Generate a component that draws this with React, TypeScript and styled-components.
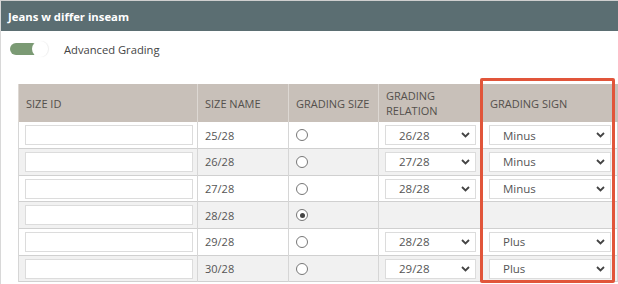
import React from "react";
import styled, { createGlobalStyle } from "styled-components";

const GlobalStyle = createGlobalStyle`
  html, body {
    margin: 0;
    padding: 0;
    background: #fff;
  }
  body {
    font-family: "Open Sans", "Liberation Sans", sans-serif;
    color: #555;
  }
`;

type Row = {
  name: string;
  checked?: boolean;
  relation?: string;
  sign?: string;
};

const rows: Row[] = [
  { name: "25/28", relation: "26/28", sign: "Minus" },
  { name: "26/28", relation: "27/28", sign: "Minus" },
  { name: "27/28", relation: "28/28", sign: "Minus" },
  { name: "28/28", checked: true },
  { name: "29/28", relation: "28/28", sign: "Plus" },
  { name: "30/28", relation: "29/28", sign: "Plus" },
];

const Chevron = () => (
  <svg width="9" height="6" viewBox="0 0 9 6">
    <polyline points="1,1 4.5,4.5 8,1" fill="none" stroke="#444" strokeWidth="1.8" />
  </svg>
);

export default function App() {
  return (
    <>
      <GlobalStyle />
      <Panel>
        <TitleBar>Jeans w differ inseam</TitleBar>
        <Body>
          <ToggleRow>
            <Toggle>
              <Track />
              <Knob />
            </Toggle>
            <ToggleLabel>Advanced Grading</ToggleLabel>
          </ToggleRow>
          <TableWrap>
            <Grid>
              <colgroup>
                <col style={{ width: 179 }} />
                <col style={{ width: 91 }} />
                <col style={{ width: 90 }} />
                <col style={{ width: 104 }} />
                <col style={{ width: 135 }} />
              </colgroup>
              <thead>
                <tr>
                  <Th>Size ID</Th>
                  <Th>Size Name</Th>
                  <Th>Grading Size</Th>
                  <Th>
                    Grading
                    <br />
                    Relation
                  </Th>
                  <Th>Grading Sign</Th>
                </tr>
              </thead>
              <tbody>
                {rows.map((r, i) => (
                  <Tr key={r.name} $alt={i % 2 === 1}>
                    <Td $pad={6}>
                      <TextBox />
                    </Td>
                    <Td>{r.name}</Td>
                    <Td>
                      <Radio $checked={!!r.checked} />
                    </Td>
                    <Td $pad={6}>
                      {r.relation && (
                        <SelectBox $indent={13}>
                          <span>{r.relation}</span>
                          <Chevron />
                        </SelectBox>
                      )}
                    </Td>
                    <Td $pad={6}>
                      {r.sign && (
                        <SelectBox $indent={13}>
                          <span>{r.sign}</span>
                          <Chevron />
                        </SelectBox>
                      )}
                    </Td>
                  </Tr>
                ))}
              </tbody>
            </Grid>
            <Highlight />
          </TableWrap>
        </Body>
      </Panel>
    </>
  );
}

const Panel = styled.div`
  width: 618px;
  height: 284px;
  box-sizing: border-box;
  border-left: 1px solid #d8d8d8;
  border-top: 1px solid #cfcfcf;
  overflow: hidden;
`;

const TitleBar = styled.div`
  height: 30px;
  background: #5b6e72;
  color: #fff;
  font-weight: 700;
  font-size: 11.3px;
  padding-left: 7px;
  display: flex;
  align-items: center;
`;

const Body = styled.div`
  padding: 0 0 0 17px;
`;

const ToggleRow = styled.div`
  display: flex;
  align-items: center;
  height: 36px;
  margin-left: -8px;
`;

const Toggle = styled.div`
  position: relative;
  width: 38px;
  height: 16px;
  margin-right: 16px;
`;

const Track = styled.div`
  position: absolute;
  left: 0;
  top: 2px;
  width: 30px;
  height: 12px;
  border-radius: 6px;
  background: #7b9a74;
`;

const Knob = styled.div`
  position: absolute;
  left: 22px;
  top: 0;
  width: 16px;
  height: 16px;
  border-radius: 50%;
  background: #fff;
  box-shadow: 1px 0 1px rgba(0, 0, 0, 0.07);
`;

const ToggleLabel = styled.span`
  font-size: 11.2px;
  color: #444;
`;

const TableWrap = styled.div`
  position: relative;
  margin-top: 17px;
`;

const Grid = styled.table`
  border-collapse: collapse;
  table-layout: fixed;
  width: 599px;
  font-size: 11px;
  color: #555;
`;

const Th = styled.th`
  height: 38px;
  padding: 0 7px;
  text-align: left;
  font-weight: 400;
  text-transform: uppercase;
  line-height: 15px;
  background: #c8c0b9;
  color: #54504c;
  border-left: 1px solid #ddd8d3;
  box-sizing: border-box;
`;

const Tr = styled.tr<{ $alt: boolean }>`
  height: 26.67px;
  background: ${(p) => (p.$alt ? "#f1f1f1" : "#fff")};
  border-bottom: 1px solid #d0d0d0;
`;

const Td = styled.td<{ $pad?: number }>`
  padding: 0 ${(p) => p.$pad ?? 7}px;
  border-left: 1px solid #d6d6d6;
  border-right: 1px solid #d6d6d6;
  vertical-align: middle;
`;

const TextBox = styled.div`
  height: 20px;
  width: 168px;
  box-sizing: border-box;
  border: 1px solid #dcdcdc;
  background: #fff;
`;

const Radio = styled.div<{ $checked: boolean }>`
  width: 12px;
  height: 12px;
  box-sizing: border-box;
  border-radius: 50%;
  border: 1px solid #777;
  background: #fff;
  display: flex;
  align-items: center;
  justify-content: center;
  &::after {
    content: "";
    width: 5px;
    height: 5px;
    border-radius: 50%;
    background: ${(p) => (p.$checked ? "#444" : "transparent")};
  }
`;

const SelectBox = styled.div<{ $indent: number }>`
  height: 20px;
  box-sizing: border-box;
  border: 1px solid #dcdcdc;
  background: #fff;
  display: flex;
  align-items: center;
  justify-content: space-between;
  padding: 0 5px 0 ${(p) => p.$indent}px;
  font-size: 11.5px;
  color: #555;
`;

const Highlight = styled.div`
  position: absolute;
  left: 462px;
  top: -6px;
  width: 135px;
  height: 205px;
  box-sizing: border-box;
  border: 3px solid #e1553a;
  border-radius: 2px;
  pointer-events: none;
`;
